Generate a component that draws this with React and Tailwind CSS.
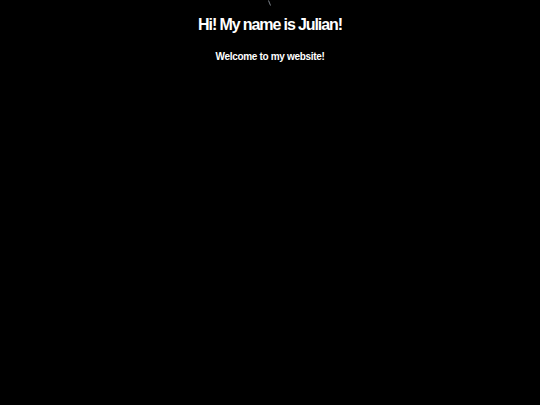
export default function App() {
  return (
    <div className="min-h-[405px] bg-black text-white font-['Liberation_Sans',Arial,sans-serif] flex flex-col items-center">
      {/* tiny mark at the top */}
      <svg width="4" height="7" viewBox="0 0 4 7" className="ml-[-1px]">
        <line x1="0.5" y1="0.5" x2="2.5" y2="5.5" stroke="#9ca3af" strokeWidth="0.8" />
      </svg>
      <h1 className="mt-[9.5px] text-[16px] font-bold tracking-[-1.1px] leading-[16px]">Hi! My name is Julian!</h1>
      <p className="mt-[19.5px] text-[10px] font-bold tracking-[-0.32px] leading-[10px]">Welcome to my website!</p>
    </div>
  );
}
